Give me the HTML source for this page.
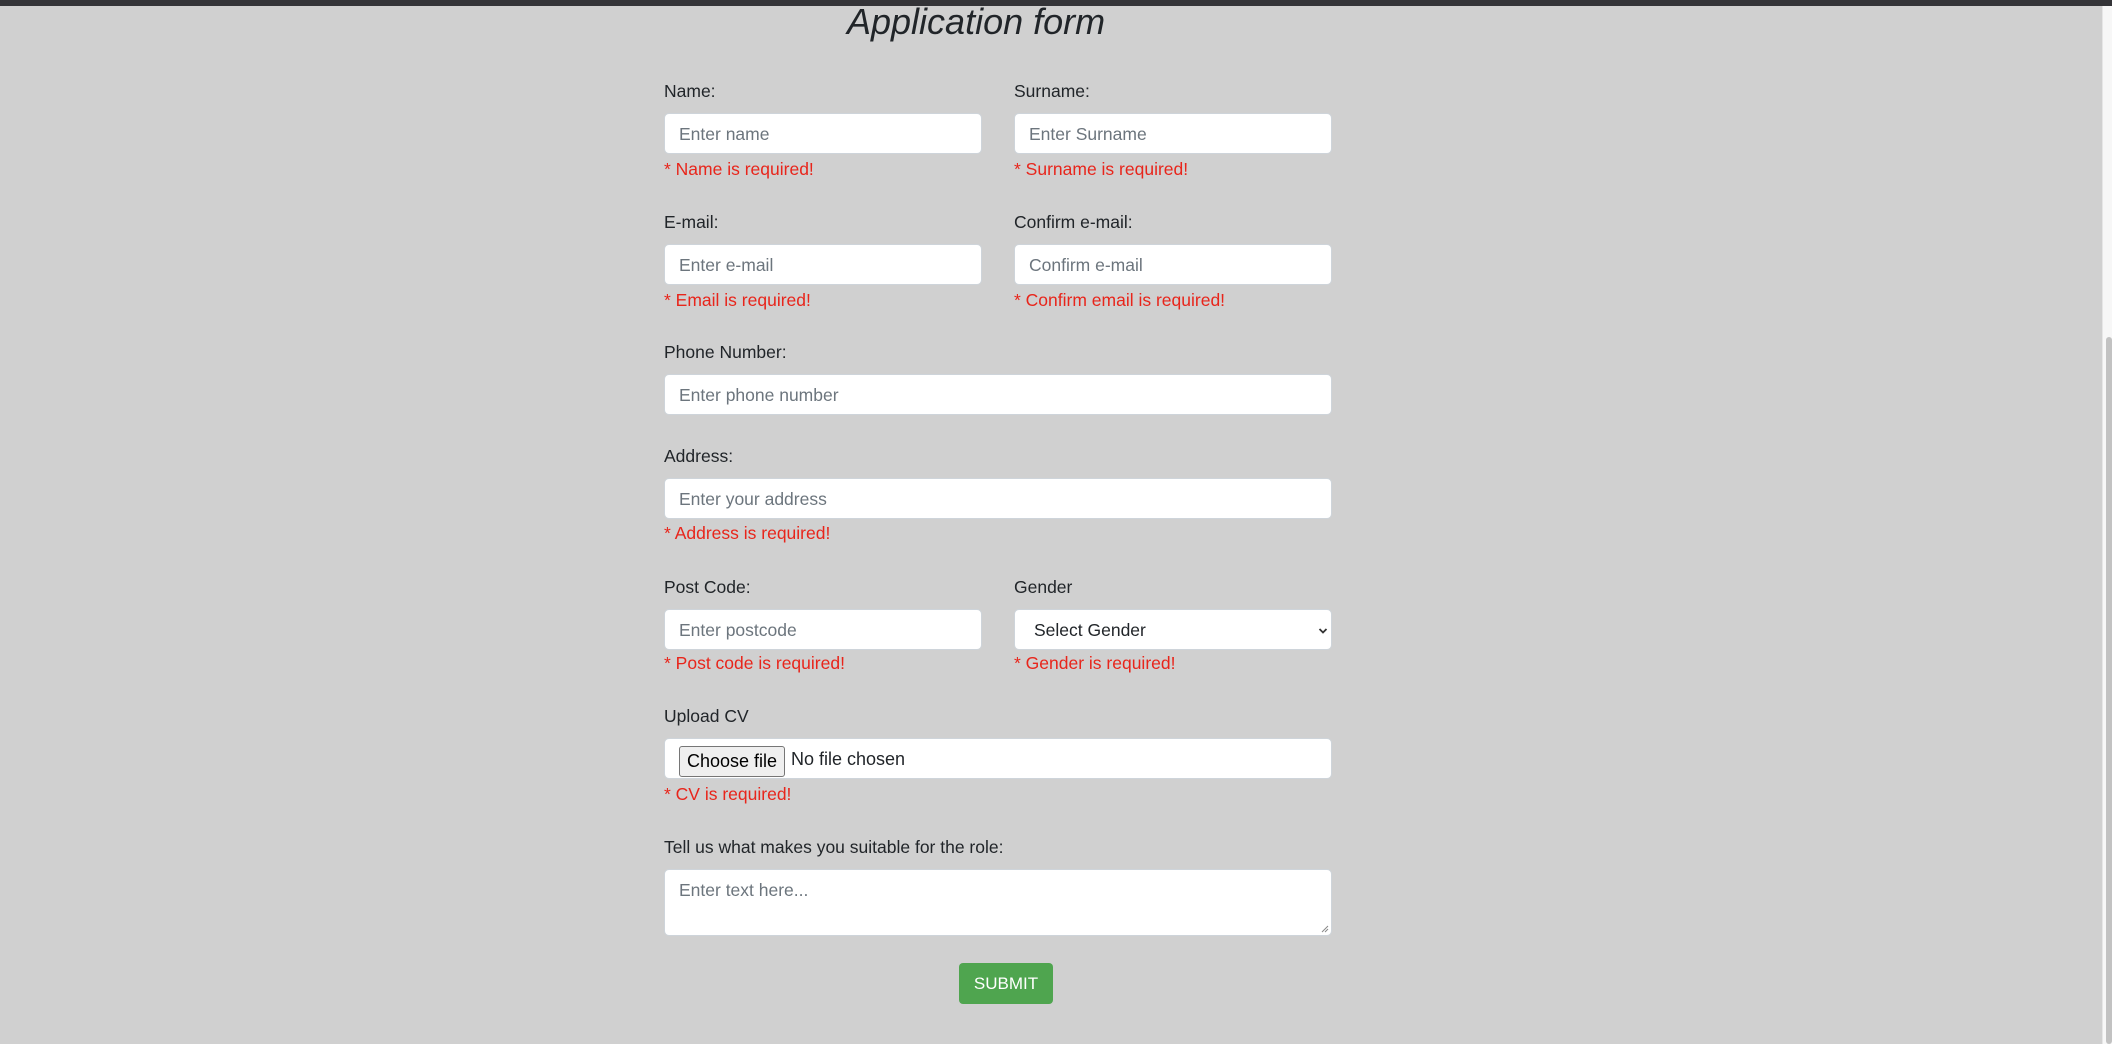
<!DOCTYPE html>
<html><head><meta charset="utf-8"><style>
html,body{margin:0;padding:0;width:2112px;height:1044px;overflow:hidden;background:#d0d0d0;font-family:"Liberation Sans",Arial,sans-serif;}
.bar{position:absolute;left:0;top:0;width:2112px;height:6px;background:#343438;}
.t{position:absolute;font-size:17.5px;line-height:20px;color:#212529;white-space:nowrap;}
.e{color:#e8251b;}
.in{position:absolute;background:#fff;border:1px solid #ced4da;border-radius:5px;box-sizing:border-box;height:41px;}
.ph{position:absolute;left:14px;top:10px;font-size:17.5px;line-height:20px;color:#6c757d;white-space:nowrap;}
h1{position:absolute;left:847px;top:2px;margin:0;font-size:36px;line-height:40px;font-style:italic;font-weight:normal;color:#212529;}
</style></head><body>
<div class="bar"></div>
<h1>Application form</h1>

<div class="t" style="left:664px;top:81px">Name:</div>
<div class="in" style="left:664px;top:113px;width:318px"><span class="ph">Enter name</span></div>
<div class="t e" style="left:664px;top:159px">* Name is required!</div>
<div class="t" style="left:1014px;top:81px">Surname:</div>
<div class="in" style="left:1014px;top:113px;width:318px"><span class="ph">Enter Surname</span></div>
<div class="t e" style="left:1014px;top:159px">* Surname is required!</div>

<div class="t" style="left:664px;top:212px">E-mail:</div>
<div class="in" style="left:664px;top:244px;width:318px"><span class="ph">Enter e-mail</span></div>
<div class="t e" style="left:664px;top:290px">* Email is required!</div>
<div class="t" style="left:1014px;top:212px">Confirm e-mail:</div>
<div class="in" style="left:1014px;top:244px;width:318px"><span class="ph">Confirm e-mail</span></div>
<div class="t e" style="left:1014px;top:290px">* Confirm email is required!</div>

<div class="t" style="left:664px;top:342px">Phone Number:</div>
<div class="in" style="left:664px;top:374px;width:668px"><span class="ph">Enter phone number</span></div>

<div class="t" style="left:664px;top:446px">Address:</div>
<div class="in" style="left:664px;top:478px;width:668px"><span class="ph">Enter your address</span></div>
<div class="t e" style="left:664px;top:523px">* Address is required!</div>

<div class="t" style="left:664px;top:577px">Post Code:</div>
<div class="in" style="left:664px;top:609px;width:318px"><span class="ph">Enter postcode</span></div>
<div class="t e" style="left:664px;top:653px">* Post code is required!</div>
<div class="t" style="left:1014px;top:577px">Gender</div>
<div class="in" style="left:1014px;top:609px;width:318px"><span class="ph" style="left:19px;color:#212529">Select Gender</span>
<svg style="position:absolute;left:303px;top:17px" width="10" height="8" viewBox="0 0 10 8"><path d="M1.5 2 L5 5.5 L8.5 2" fill="none" stroke="#333" stroke-width="1.8"/></svg></div>
<div class="t e" style="left:1014px;top:653px">* Gender is required!</div>

<div class="t" style="left:664px;top:706px">Upload CV</div>
<div class="in" style="left:664px;top:738px;width:668px">
<div style="position:absolute;left:14px;top:7px;width:106px;height:31px;box-sizing:border-box;border:1px solid #767676;border-radius:3px;background:#efefef;font-size:18px;line-height:29px;text-align:center;color:#000">Choose file</div>
<span style="position:absolute;left:126px;top:10px;font-size:18px;line-height:20px;color:#212529">No file chosen</span></div>
<div class="t e" style="left:664px;top:784px">* CV is required!</div>

<div class="t" style="left:664px;top:837px">Tell us what makes you suitable for the role:</div>
<div class="in" style="left:664px;top:869px;width:668px;height:67px"><span class="ph" style="top:10px">Enter text here...</span>
<svg style="position:absolute;right:2px;bottom:2px" width="8" height="8"><path d="M1 7L7 1M4 7L7 4" stroke="#888" stroke-width="1"/></svg></div>

<div style="position:absolute;left:959px;top:963px;width:94px;height:41px;background:#4fa54f;border-radius:4px;color:#fff;font-size:17px;line-height:41px;text-align:center">SUBMIT</div>

<div style="position:absolute;left:2102px;top:6px;width:10px;height:1038px;background:#f7f7f7;border-left:1px solid #e6e6e6"></div>
<div style="position:absolute;left:2106px;top:337px;width:6px;height:707px;background:#c2c2c2;border-radius:3px"></div>
</body></html>
